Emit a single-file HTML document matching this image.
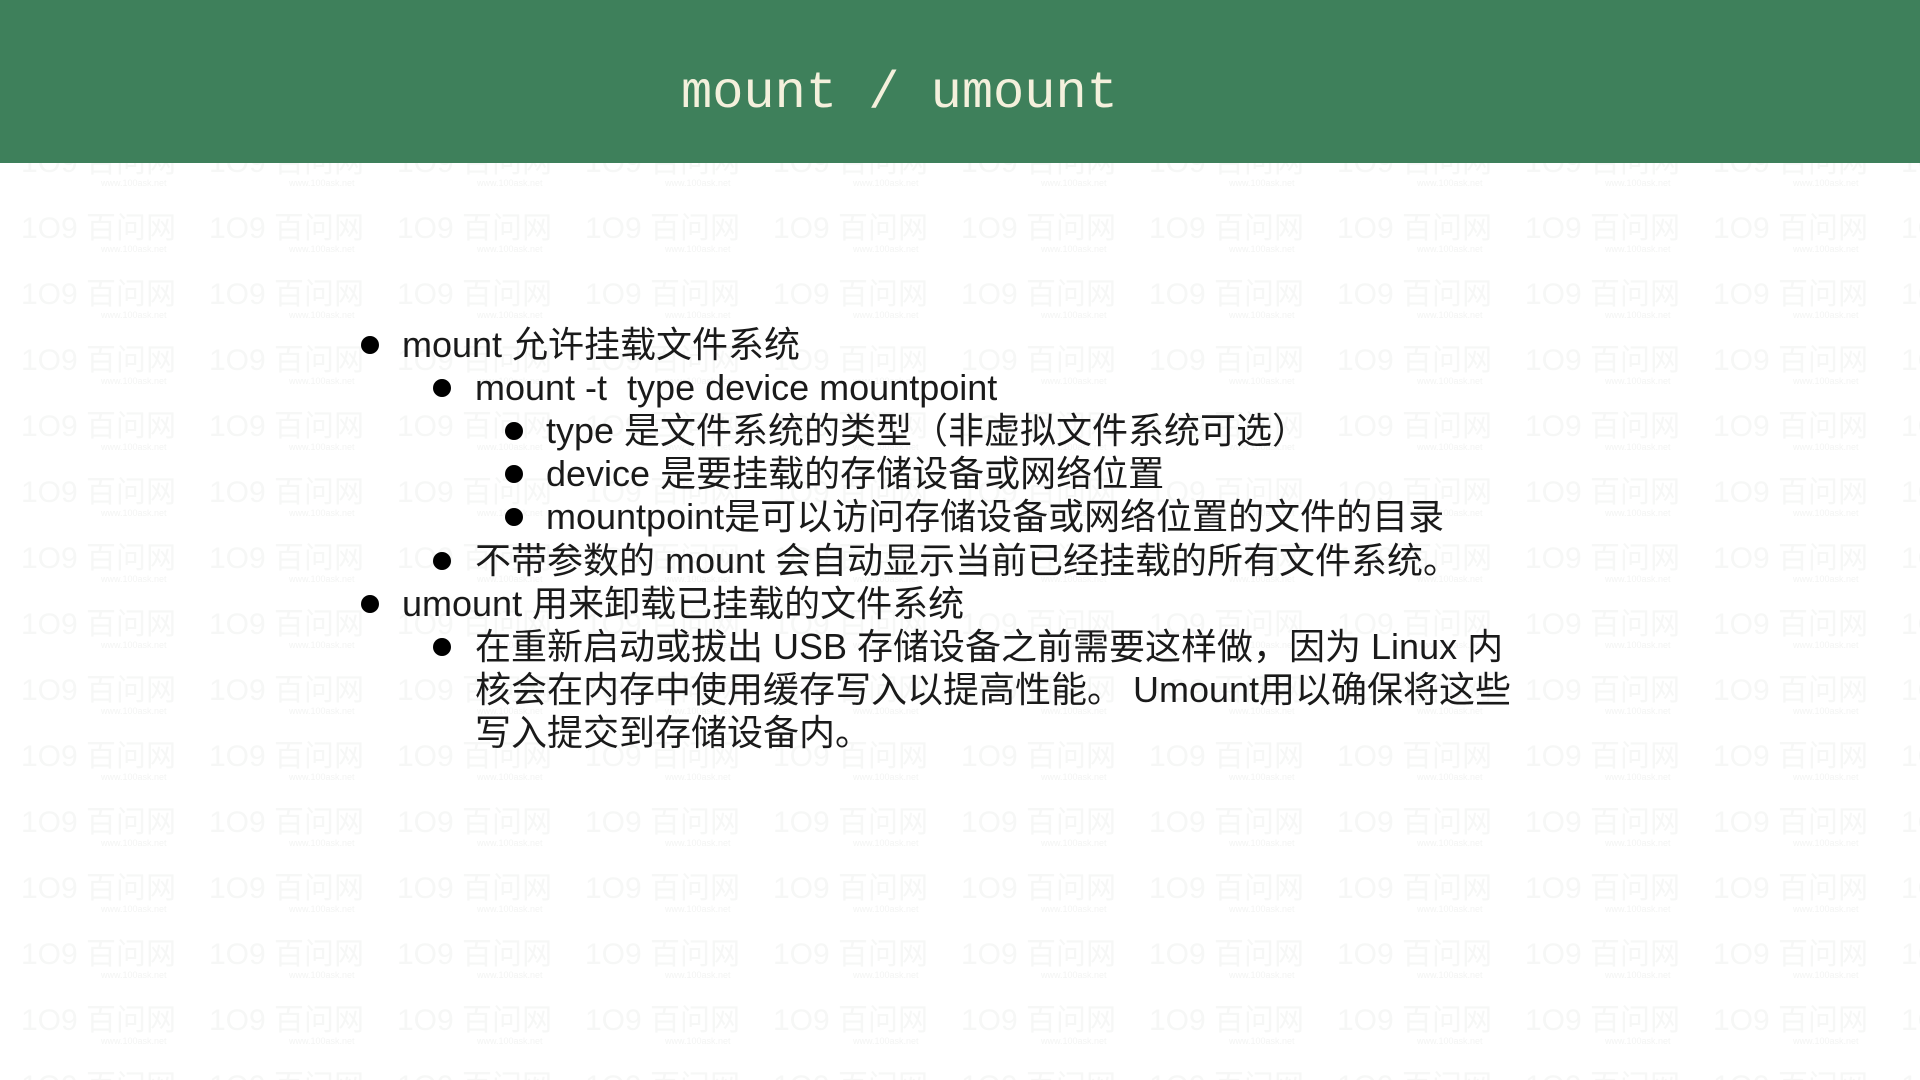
<!DOCTYPE html>
<html><head><meta charset="utf-8"><style>
html,body{margin:0;width:1920px;height:1080px;overflow:hidden;background:#fff;}
#root{position:relative;width:1920px;height:1080px;overflow:hidden;font-family:"Liberation Sans","Noto Sans CJK SC",sans-serif;}
.hdr{position:absolute;left:0;top:0;width:1920px;height:163px;background:#3e805b;}
.title{position:absolute;left:681px;top:59px;font-family:"Liberation Mono",monospace;font-size:52px;color:#f4f0dc;white-space:pre;line-height:70px;}
.wm{position:absolute;color:#f6f7f6;font-size:30px;white-space:nowrap;line-height:30px;}
.wm small{display:block;font-size:9px;line-height:10px;margin-left:80px;color:#f3f4f3}
.l{position:absolute;font-size:36px;color:#1a1a1a;white-space:nowrap;line-height:43px;}
.d{position:absolute;width:18px;height:18px;border-radius:50%;background:#000;}
</style></head><body><div id="root">
<div id="wm"></div>
<div class="hdr"></div>
<div class="title">mount / umount</div>

<div class="d" style="left:361px;top:336px"></div><div class="l" style="left:402px;top:323px">mount 允许挂载文件系统</div>
<div class="d" style="left:433px;top:379px"></div><div class="l" style="left:475px;top:366px">mount -t&nbsp; type device mountpoint</div>
<div class="d" style="left:505px;top:422px"></div><div class="l" style="left:546px;top:409px">type 是文件系统的类型（非虚拟文件系统可选）</div>
<div class="d" style="left:505px;top:465px"></div><div class="l" style="left:546px;top:452px">device 是要挂载的存储设备或网络位置</div>
<div class="d" style="left:505px;top:508px"></div><div class="l" style="left:546px;top:495px">mountpoint是可以访问存储设备或网络位置的文件的目录</div>
<div class="d" style="left:433px;top:552px"></div><div class="l" style="left:475px;top:539px">不带参数的 mount 会自动显示当前已经挂载的所有文件系统。</div>
<div class="d" style="left:361px;top:595px"></div><div class="l" style="left:402px;top:582px">umount 用来卸载已挂载的文件系统</div>
<div class="d" style="left:433px;top:638px"></div><div class="l" style="left:475px;top:625px">在重新启动或拔出 USB 存储设备之前需要这样做，因为 Linux 内</div>
<div class="l" style="left:475px;top:668px">核会在内存中使用缓存写入以提高性能。 Umount用以确保将这些</div>
<div class="l" style="left:475px;top:711px">写入提交到存储设备内。</div>
</div>
<script>
var h='';for(var r=0;r<15;r++){for(var c=0;c<11;c++){h+='<div class="wm" style="left:'+(21+c*188)+'px;top:'+(148+r*66)+'px">1O9 百问网<small>www.100ask.net</small></div>';}}document.getElementById('wm').innerHTML=h;
</script>
</body></html>
